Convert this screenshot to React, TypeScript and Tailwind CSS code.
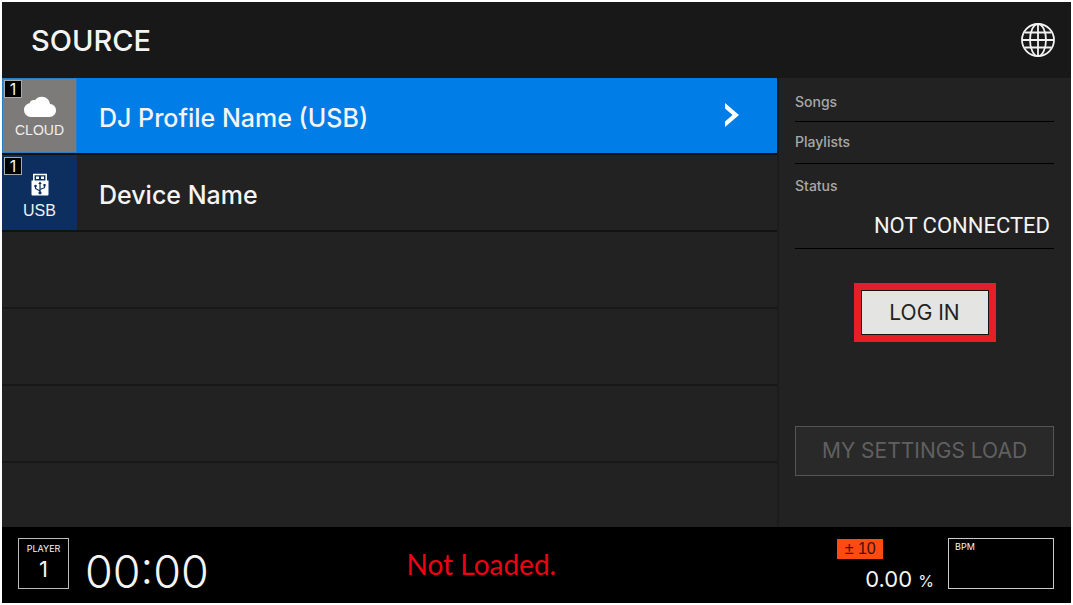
import React from 'react';

const GlobeIcon = () => (
  <svg width="36" height="36" viewBox="0 0 36 36" fill="none" stroke="#f2f2f2" strokeWidth="1.8">
    <circle cx="18" cy="18" r="16" />
    <ellipse cx="18" cy="18" rx="8" ry="16" />
    <path d="M18 2v32M2 18h32M4.500 10.500h27M4.500 25.500h27" />
  </svg>
);

const CloudIcon = () => (
  <svg width="34" height="22" viewBox="0 0 34 22" fill="#fff">
    <path d="M8 21a7 7 0 0 1-7-7c0-3.600 2.400-6.200 5.600-6.700C7.400 4.800 9.500 3.600 12 4.200 13.600 1.900 16 .8 18.800.8c4.400 0 7.600 3 8.200 7.300 3.500.2 6 2.800 6 6.200 0 3.800-2.800 6.700-6.500 6.700z" />
  </svg>
);

const UsbIcon = () => (
  <svg width="18" height="24" viewBox="0 0 18 24">
    <path d="M2.800 8V1.500h12.400V8" fill="none" stroke="#fff" strokeWidth="1.500" />
    <path d="M5 3.500h3v2.500H5zM10 3.500h3v2.500h-3z" fill="#fff" />
    <path d="M.5 7.500h17v14a1 1 0 0 1-1 1h-15a1 1 0 0 1-1-1z" fill="#fff" />
    <path d="M9 10.500v8.500M9 18 4.500 15.500v-2.500M9 16.500l4.500-1.800V12" fill="none" stroke="#0d2f60" strokeWidth="1.200" />
    <path d="m9 8.500 1.800 2.600H7.200z" fill="#0d2f60" />
    <circle cx="9" cy="19.800" r="1.600" fill="#0d2f60" />
    <circle cx="4.500" cy="13" r="1.300" fill="#0d2f60" />
    <path d="M12.400 11h2.200v2.200h-2.200z" fill="#0d2f60" />
  </svg>
);

const ChevronIcon = () => (
  <svg width="16" height="26" viewBox="0 0 16 26" fill="#fff">
    <path d="M1 1v5.500L8.500 13 1 19.500V25l14-12z" />
  </svg>
);

interface SourceRowProps {
  name: string;
  type: string;
  icon: React.ReactNode;
  selected?: boolean;
}

const SourceRow: React.FC<SourceRowProps> = ({ name, type, icon, selected = false }) => (
  <li className="h-[77px] border-b-2 border-[#121212]">
    <button
      type="button"
      className={`w-full h-full flex items-center text-left ${selected ? 'bg-[#007de6]' : 'bg-[#222222]'}`}
    >
      <span
        className={`relative w-[75px] h-full shrink-0 flex flex-col items-center justify-end border ${
          selected
            ? 'border-[#2b7dc4] bg-[#7d7b79] pb-3.5 text-sm leading-4'
            : 'border-[#0d2f60] bg-[#0d2f60] pb-2 text-base leading-5'
        }`}
      >
        <span className="absolute top-px left-px w-[18px] h-[18px] flex items-center justify-center bg-black border border-[#aaaaaa] text-base leading-4 font-['Inter']">
          1
        </span>
        {icon}
        <span className="mt-1 text-[#f0f0f0]">{type}</span>
      </span>
      <span className="flex-1 pl-[22px] pt-1 font-['Inter'] text-[25px] leading-8 font-medium">{name}</span>
      {selected && (
        <span className="pr-[37px] pb-0.5">
          <ChevronIcon />
        </span>
      )}
    </button>
  </li>
);

export default function App() {
  return (
    <div className="min-h-screen flex flex-col border-2 border-white bg-[#222222] text-[#f4f4f4] font-['Liberation_Sans',Arial,sans-serif]">
      <header className="h-[76px] shrink-0 flex items-center justify-between pl-[29px] pr-[15px] bg-[#181818]">
        <h1 className="pt-0.5 font-['Inter'] text-[29px] leading-8 font-medium">SOURCE</h1>
        <button type="button" aria-label="Network">
          <GlobeIcon />
        </button>
      </header>

      <main className="flex-1 flex">
        <ul className="flex-1 flex flex-col border-r-2 border-[#1c1c1c]">
          <SourceRow name="DJ Profile Name (USB)" type="CLOUD" icon={<CloudIcon />} selected />
          <SourceRow name="Device Name" type="USB" icon={<UsbIcon />} />
          <li className="h-[77px] border-b-2 border-[#181818]" />
          <li className="h-[77px] border-b-2 border-[#181818]" />
          <li className="h-[77px] border-b-2 border-[#181818]" />
          <li className="flex-1" />
        </ul>

        <aside className="w-[292px] shrink-0 flex flex-col pl-4 pr-[17px]">
          <dl className="font-['Inter'] text-[#a8a8a8] text-sm leading-4 font-medium">
            <div className="h-11 pt-4 border-b border-black">
              <dt>Songs</dt>
            </div>
            <div className="h-[42px] pt-3 border-b border-black">
              <dt>Playlists</dt>
            </div>
            <div className="h-[85px] pt-3.5 border-b border-black">
              <dt>Status</dt>
              <dd className="pt-4 pr-1 text-right text-[#f4f4f4] font-['Roboto'] text-[22px] leading-8 font-normal">
                NOT CONNECTED
              </dd>
            </div>
          </dl>
          <button
            type="button"
            className="self-center mt-[34px] w-[142px] h-[59px] p-px border-[7px] border-[#e61e28] bg-[#151515]"
          >
            <span className="w-full h-full flex items-center justify-center bg-[#e4e5e3] text-[#222222] font-['Inter'] text-[21px] leading-6">
              LOG IN
            </span>
          </button>
          <button
            type="button"
            disabled
            className="mt-[84px] h-[50px] border border-[#555555] bg-[#292929] text-[#606060] font-['Inter'] text-[21px] leading-6"
          >
            MY SETTINGS LOAD
          </button>
        </aside>
      </main>

      <footer className="h-[76px] shrink-0 flex items-center pl-4 pr-[17px] pb-[3px] bg-black">
        <div className="w-3/8 flex items-center">
          <div className="w-[51px] h-[51px] border border-[#bbbbbb] flex flex-col items-center pt-1 font-['Inter']">
            <span className="text-[9px] leading-3">PLAYER</span>
            <span className="text-[22px] leading-7">1</span>
          </div>
          <time className="pl-4 pt-4 font-['Inter'] font-light text-[45px] leading-12">00:00</time>
        </div>
        <p className="flex-1 pt-px text-[#f00014] font-['Lato'] text-[28px] leading-8">Not Loaded.</p>
        <div className="flex items-center gap-3.5">
          <div className="flex flex-col pt-1">
            <span className="w-[46px] h-5 flex items-center justify-center bg-[#ff4a12] text-[#401008] text-base leading-5">
              ± 10
            </span>
            <span className="pl-7 pt-2 font-['Inter'] text-[22px] leading-6">
              0.00 <span className="text-base">%</span>
            </span>
          </div>
          <div className="w-[106px] h-[51px] border border-[#cccccc] px-1.5 py-0.5 text-[9px] leading-3 font-['Inter']">
            BPM
          </div>
        </div>
      </footer>
    </div>
  );
}
